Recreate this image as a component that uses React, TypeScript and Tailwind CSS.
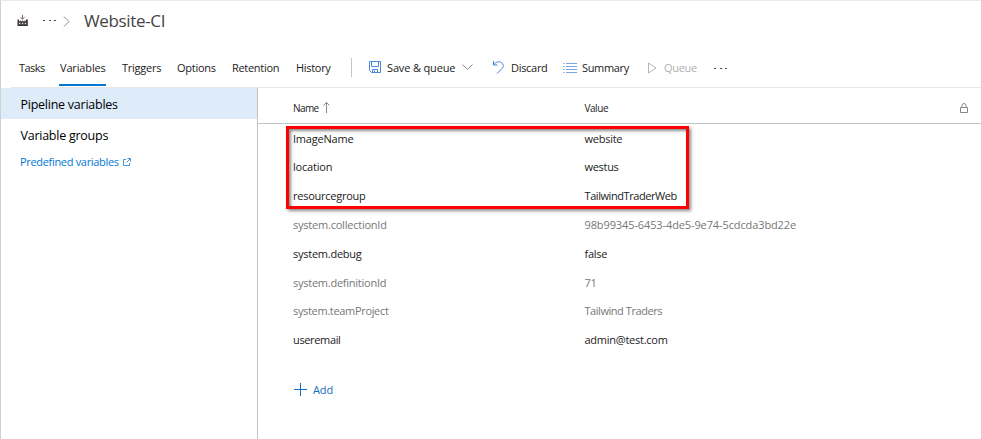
import React from "react";

const tabs = [
  { label: "Tasks", box: "w-[41px]", tracking: "tracking-[-0.55px]" },
  { label: "Variables", box: "w-[62px]", tracking: "tracking-[-0.15px]", active: true },
  { label: "Triggers", box: "w-[55px]", tracking: "tracking-[-0.25px]" },
  { label: "Options", box: "w-[55px]", tracking: "tracking-[-0.25px]" },
  { label: "Retention", box: "w-[64px]", tracking: "tracking-[-0.3px]" },
  { label: "History", box: "w-[55px]", tracking: "tracking-[-0.3px]" },
];

const rows = [
  { name: "ImageName", value: "website", h: "h-[28px]", nt: "tracking-[-0.2px]", vt: "tracking-[-0.25px]" },
  { name: "location", value: "westus", h: "h-[29px]", nt: "tracking-[-0.2px]", vt: "tracking-[-0.3px]" },
  { name: "resourcegroup", value: "TailwindTraderWeb", h: "h-[29px]", nt: "tracking-[-0.25px]", vt: "tracking-[-0.43px]" },
  { name: "system.collectionId", value: "98b99345-6453-4de5-9e74-5cdcda3bd22e", h: "h-[29px]", muted: true, nt: "tracking-[-0.22px]", vt: "tracking-[-0.11px]" },
  { name: "system.debug", value: "false", h: "h-[29px]", nt: "tracking-[-0.25px]", vt: "tracking-[-0.3px]" },
  { name: "system.definitionId", value: "71", h: "h-[28px]", muted: true, nt: "tracking-[-0.25px]", vt: "tracking-[-0.2px]" },
  { name: "system.teamProject", value: "Tailwind Traders", h: "h-[29px]", muted: true, nt: "tracking-[-0.33px]", vt: "tracking-[-0.45px]" },
  { name: "useremail", value: "admin@test.com", h: "h-[29px]", nt: "tracking-[-0.35px]", vt: "tracking-[-0.25px]" },
];

function BuildIcon() {
  return (
    <svg width="12" height="12" viewBox="0 0 12 12" fill="none" className="shrink-0">
      <path d="M5.5 0v4M3.600 2.300l1.900 1.900 1.900-1.900" stroke="#666" />
      <path d="M.5 4.500H2v2l1.800-1.300v1.500l1.900-1.500v1.500l1.800-1.500v1.500L9 5.500v-1h1.800V11H.5z" fill="#3d3438" />
      <path d="M2 8.500h1.400M4.900 8.500h1.400M7.800 8.500h1.400" stroke="#e4e9f5" strokeWidth="1.300" />
    </svg>
  );
}

function SaveIcon() {
  return (
    <svg width="13" height="13" viewBox="0 0 13 13" fill="none" stroke="#4a8ad8" className="-mt-px shrink-0">
      <path d="M.5.5h11v11h-9l-2-2zM2.500.5v5h7v-5M3.500 11.500v-3h5v3M5.500 9.500v2" />
    </svg>
  );
}

function MoreIcon({ className }: { className: string }) {
  return (
    <svg width="14" height="3" viewBox="0 0 14 3" fill="#444" className={`shrink-0 ${className}`}>
      <path d="M0 1h2v1H0zM6 1h2v1H6zM11 1h2v1h-2z" />
    </svg>
  );
}

export default function App() {
  return (
    <div className="relative flex h-[439px] w-[981px] flex-col overflow-hidden border-l border-t border-l-[#d0d0d0] border-t-[#eaeaea] bg-white font-['Open_Sans','Noto_Sans',sans-serif] text-[11px] text-[#222] whitespace-nowrap">
      <header className="flex h-[40px] shrink-0 items-center pl-4">
        <BuildIcon />
        <MoreIcon className="-mt-[2px] ml-[14px]" />
        <svg width="8" height="11" viewBox="0 0 8 11" fill="none" stroke="#999" className="ml-[6px]">
          <path d="M.7.5l5.500 5-5.500 5" />
        </svg>
        <h1 className="ml-[13px] text-[17px] font-normal tracking-[-0.35px] text-[#444]">Website-CI</h1>
      </header>

      <div className="flex h-[47px] shrink-0">
        <div className="w-[10px] shrink-0" />
        <nav className="flex grow border-b border-[#e6e6e6] pl-2">
          {tabs.map((t) => (
            <div key={t.label} className={`shrink-0 ${t.box} ${t.tracking}`}>
              <div className={`-ml-px inline-flex h-[45px] items-center border-b-2 pl-px pt-[12px] ${t.active ? "border-[#0078d4]" : "border-transparent"}`}>
                {t.label}
              </div>
            </div>
          ))}
          <div className="mt-[17px] h-[19px] w-[18px] shrink-0 border-l border-[#c4c4c4]" />
          <div className="flex h-[46px] items-center pt-[8px]">
            <SaveIcon />
            <span className="ml-[5px] w-[75px] tracking-[-0.15px]">Save &amp; queue</span>
            <svg width="11" height="6" viewBox="0 0 11 6" fill="none" stroke="#888" className="-mt-[2px] shrink-0">
              <path d="M.5.5l5 5 5-5" />
            </svg>
            <svg width="11" height="13" viewBox="0 0 11 13" fill="none" stroke="#3b82d3" className="-mt-[2px] ml-[20px] shrink-0">
              <path d="M.5 0v4h4M.700 3.800C2.500 1 6 0 8.500 1.600 11 3.400 10.500 6 9 7.500L4 12.500" />
            </svg>
            <span className="ml-[7px] w-[52px] tracking-[-0.3px]">Discard</span>
            <svg width="14" height="10" viewBox="0 0 14 10" fill="none" stroke="#7ba5df" className="shrink-0">
              <path d="M0 .5h1.500M3 .5h11M0 3.500h1.500M3 3.500h11M0 6.500h1.500M3 6.500h11M0 9.500h1.500M3 9.500h11" />
            </svg>
            <span className="ml-[5px] w-[66px] tracking-[-0.35px]">Summary</span>
            <svg width="9" height="12" viewBox="0 0 9 12" fill="none" stroke="#b5b5b5" className="-mt-px shrink-0">
              <path d="M.5 1v10L8 6z" />
            </svg>
            <span className="ml-[7px] w-[50px] tracking-[-0.3px] text-[#b0b0b0]">Queue</span>
            <MoreIcon className="" />
          </div>
        </nav>
      </div>

      <div className="flex min-h-0 grow">
        <aside className="w-[257px] shrink-0 border-r border-[#c4c4c4] text-[12.5px] text-black">
          <div className="flex h-[31px] items-center bg-[#deecf9] pl-[19.5px] pt-[3px] tracking-[-0.25px]">Pipeline variables</div>
          <div className="flex h-[31px] items-center pl-[19.5px] pt-[3px] tracking-[-0.25px]">Variable groups</div>
          <a className="flex h-[24px] items-center pl-[19px] text-[11px] text-[#0078d4]">
            <span className="w-[103px] tracking-[-0.32px]">Predefined variables</span>
            <svg width="8" height="8" viewBox="0 0 8 8" fill="none" stroke="#4a90d9" className="shrink-0">
              <path d="M3 1.500H.5v6h6V5M4.500.5h3v3M7.500.5L3.500 4.500" />
            </svg>
          </a>
        </aside>

        <main className="relative grow">
          <div className="flex h-[36px] items-center border-b border-[#c4c4c4] pl-[35px] pt-[6px] text-[10px] tracking-[-0.2px]">
            <div className="flex w-[291.500px] items-center">
              <span className="w-[30px] tracking-[-0.6px]">Name</span>
              <svg width="7" height="11" viewBox="0 0 7 11" fill="none" stroke="#888" className="-mt-[2px]">
                <path d="M3.500 11V.5M.5 3.500l3-3 3 3" />
              </svg>
            </div>
            <span className="w-[375.500px] tracking-[-0.45px]">Value</span>
            <svg width="8" height="11" viewBox="0 0 8 11" fill="none" stroke="#888" className="-mt-px">
              <path d="M.5 4.500h7v5h-7zM2 4.500v-2a2 2 0 0 1 4 0v2" />
            </svg>
          </div>
          <div className="pt-px">
            {rows.map((r) => (
              <div key={r.name} className={`flex items-center pl-[35px] ${r.h} ${r.muted ? "text-[#777]" : "text-[#222]"}`}>
                <span className={`w-[291.5px] ${r.nt}`}>{r.name}</span>
                <span className={r.vt}>{r.value}</span>
              </div>
            ))}
          </div>
          <div className="mt-[21px] flex h-[28px] items-center pl-[36px] text-[#106ebe]">
            <svg width="13" height="13" viewBox="0 0 13 13" stroke="#106ebe" className="-mt-px">
              <path d="M6.500 0v13M0 6.500h13" />
            </svg>
            <span className="ml-[6px] tracking-[-0.15px]">Add</span>
          </div>
          <div className="pointer-events-none absolute left-[28px] top-[38px] h-[83px] w-[403px] border-[3px] border-[#fe0000] shadow-[2px_2px_3px_rgba(0,0,0,0.45),inset_2px_2px_3px_rgba(0,0,0,0.45)]" />
        </main>
      </div>
    </div>
  );
}
